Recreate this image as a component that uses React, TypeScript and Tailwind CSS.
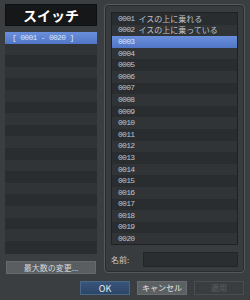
import React from 'react'

const names: Record<number, string> = {
  1: 'イスの上に乗れる',
  2: 'イスの上に乗っている',
}

const mono = { fontFamily: '"Liberation Mono", "DejaVu Sans Mono", monospace' }

export default function App() {
  const rows = Array.from({ length: 20 }, (_, i) => i + 1)
  const leftRows = Array.from({ length: 19 }, (_, i) => i)

  return (
    <div
      className="w-[250px] h-[300px] bg-[#3b3e41] overflow-hidden select-none"
      style={{ fontFamily: '"Noto Sans CJK JP", "Liberation Sans", sans-serif' }}
    >
      <div className="flex gap-[7px] pl-[5px] pt-[4px]">
        {/* left column */}
        <div className="w-[92px] flex flex-col">
          <div className="h-[22px] bg-[#161718] border border-[#0f1011] flex items-center justify-center text-white font-bold text-[14px] leading-none">
            スイッチ
          </div>
          <div className="mt-[6px] h-[222px] bg-[#2b2e31] overflow-hidden">
            {leftRows.map((i) => (
              <div
                key={i}
                className={
                  i === 0
                    ? 'h-[11.6px] bg-gradient-to-b from-[#6a8fdb] to-[#5176c6] text-[#dbe4f7] text-[8px] leading-[11.6px] pl-[7px] tracking-[-0.7px]'
                    : i % 2 === 0
                      ? 'h-[11.6px] bg-[#2a2d30]'
                      : 'h-[11.6px] bg-[#313437]'
                }
                style={i === 0 ? mono : undefined}
              >
                {i === 0 ? '[ 0001 - 0020 ]' : ''}
              </div>
            ))}
          </div>
          <div className="mt-[7px] h-[13px] mx-[1px] bg-[#5b5e61] border border-[#666a6d] flex items-center justify-center text-[8px] text-[#d5d7d9] leading-none">
            最大数の変更...
          </div>
        </div>

        {/* right group box */}
        <div className="w-[141px] h-[269px] rounded-[4px] border border-[#56595c] bg-[#393c3f] shadow-[inset_0_0_0_1px_#2a2c2e] px-[6px] pt-[7px]">
          <div className="h-[233px] bg-[#2b2e31] border border-[#1f2123] overflow-hidden">
            {rows.map((n) => (
              <div
                key={n}
                className={
                  n === 3
                    ? 'h-[11.6px] flex items-center pl-[6px] bg-gradient-to-b from-[#6a8fdb] to-[#5176c6] text-[#dbe4f7]'
                    : n % 2 === 1
                      ? 'h-[11.6px] flex items-center pl-[6px] bg-[#2a2d30] text-[#bfc3c8]'
                      : 'h-[11.6px] flex items-center pl-[6px] bg-[#313437] text-[#bfc3c8]'
                }
              >
                <span className="text-[8px] leading-none tracking-[-0.7px]" style={mono}>
                  {String(n).padStart(4, '0')}
                </span>
                {names[n] && (
                  <span className="ml-[4px] text-[8px] leading-none">{names[n]}</span>
                )}
              </div>
            ))}
          </div>
          <div className="mt-[7px] flex items-center">
            <span className="text-[8px] text-[#c8cacc] leading-none w-[32px]">名前:</span>
            <div className="w-[95px] h-[15px] bg-[#2b2e31] border border-[#222426]" />
          </div>
        </div>
      </div>

      {/* bottom buttons */}
      <div className="flex justify-end gap-[7px] pr-[6px] mt-[7px]">
        <div className="w-[50px] h-[14px] bg-gradient-to-b from-[#38557a] to-[#2c4667] border border-[#4a6788] flex items-center justify-center text-[9px] text-[#e8ecf1] leading-none">
          OK
        </div>
        <div className="w-[50px] h-[14px] bg-[#5d6063] border border-[#6a6d70] flex items-center justify-center text-[8px] text-[#e0e2e4] leading-none">
          キャンセル
        </div>
        <div className="w-[50px] h-[14px] bg-[#3a3d40] border border-[#4a4d50] flex items-center justify-center text-[8px] text-[#5e6164] leading-none">
          適用
        </div>
      </div>
    </div>
  )
}
